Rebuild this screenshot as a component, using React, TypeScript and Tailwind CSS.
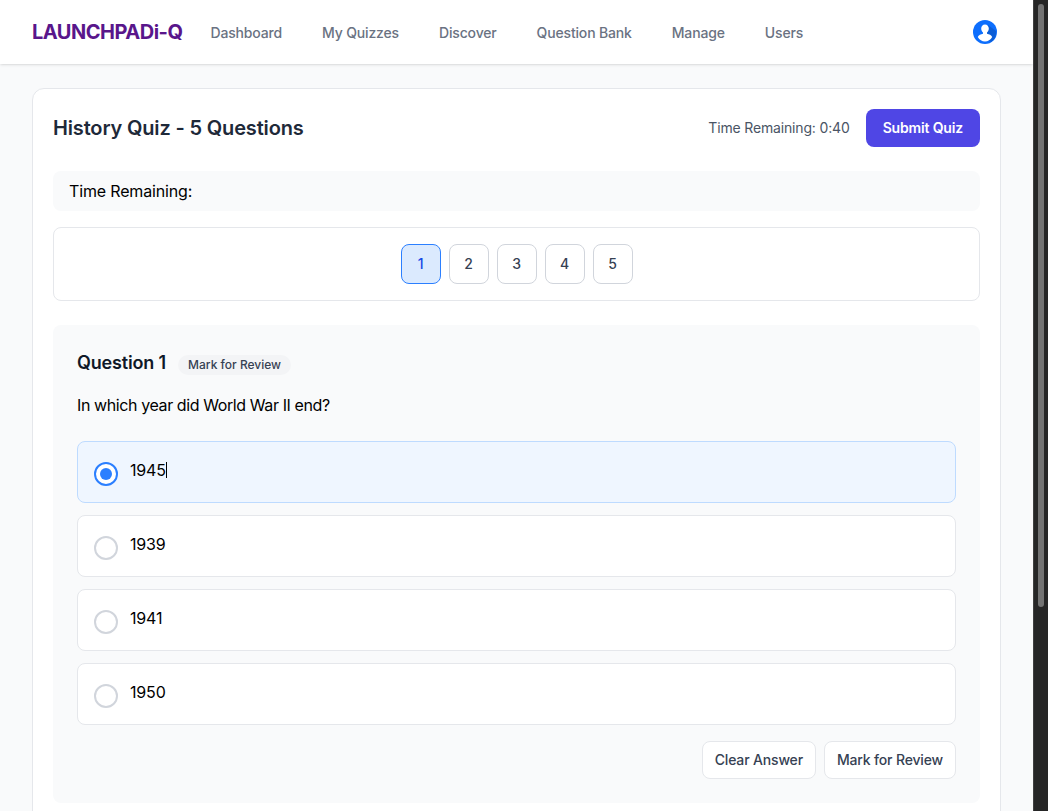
const links = ["Dashboard", "My Quizzes", "Discover", "Question Bank", "Manage", "Users"];
const pages = [1, 2, 3, 4, 5];
const options = ["1945", "1939", "1941", "1950"];

const Avatar = () => (
  <svg viewBox="0 0 24 24" className="h-6 w-6">
    <circle cx="12" cy="12" r="12" fill="#0d6efd" />
    <path fill="#0b5ed7" d="M15 5l8 6a12 12 0 0 1-5 11l-6-4z" />
    <path
      fill="#fff"
      d="M12 4.500c-2.300 0-3.800 1.800-3.800 4 0 1.700.7 3.100 1.800 4v1.200c-2.100.5-4.400 1.400-5.200 3.200C6.400 19.700 9 21.500 12 21.500s5.600-1.800 7.200-4.600c-.8-1.800-3.100-2.700-5.200-3.200v-1.200c1.100-.9 1.800-2.300 1.800-4 0-2.200-1.500-4-3.800-4z"
    />
  </svg>
);

const App = () => {
  return (
    <div className="flex h-screen overflow-hidden font-['Inter',sans-serif] tracking-[-0.01em]">
      <div className="min-w-0 flex-1 bg-gray-50">
        {/* Nav */}
        <header className="flex h-16 items-center justify-between bg-white px-8 shadow">
          <div className="flex items-center gap-7">
            <span className="text-xl font-bold tracking-tight text-purple-900">LAUNCHPADi-Q</span>
            <nav className="flex gap-10 pt-0.5">
              {links.map((l) => (
                <a key={l} className="text-sm font-medium text-gray-500">
                  {l}
                </a>
              ))}
            </nav>
          </div>
          <div className="pr-1">
            <Avatar />
          </div>
        </header>

        <main className="px-8 py-6">
          <div className="rounded-xl border border-gray-200 bg-white p-5">
            <div className="mb-6 flex items-center justify-between">
              <h1 className="text-xl font-semibold text-gray-800">History Quiz - 5 Questions</h1>
              <div className="flex items-center gap-4">
                <span className="text-sm text-gray-600">Time Remaining: 0:40</span>
                <button className="rounded-lg border border-transparent bg-[#4f46e5] px-4 py-2 text-sm font-semibold text-white">
                  Submit Quiz
                </button>
              </div>
            </div>

            <div className="mb-4 rounded-lg bg-gray-50 px-4 py-2 text-black">Time Remaining:</div>

            <div className="mb-6 flex justify-center gap-2 rounded-lg border border-gray-200 p-4">
              {pages.map((p) =>
                p === 1 ? (
                  <button
                    key={p}
                    className="h-10 w-10 rounded-lg border border-blue-500 bg-blue-100 text-sm font-medium text-blue-700"
                  >
                    {p}
                  </button>
                ) : (
                  <button
                    key={p}
                    className="h-10 w-10 rounded-lg border border-gray-300 bg-white text-sm font-medium text-gray-700"
                  >
                    {p}
                  </button>
                ),
              )}
            </div>

            <section className="rounded-lg bg-gray-50 p-6">
              <div className="mb-4 flex items-center gap-3">
                <h2 className="text-lg font-semibold text-gray-900">Question 1</h2>
                <span className="mt-1 rounded-full bg-gray-100 px-2.5 py-0.5 text-xs font-medium tracking-normal text-gray-700">
                  Mark for Review
                </span>
              </div>
              <p className="mb-6 tracking-tight text-black">In which year did World War II end?</p>

              <div className="flex flex-col gap-3">
                {options.map((o, i) => (
                  <label
                    key={o}
                    className={
                      i === 0
                        ? "flex gap-3 rounded-lg border border-blue-200 bg-blue-50 p-4"
                        : "flex gap-3 rounded-lg border border-gray-200 bg-white p-4"
                    }
                  >
                    {i === 0 ? (
                      <span className="mt-1 flex h-6 w-6 items-center justify-center rounded-full border-2 border-blue-500 bg-white">
                        <span className="h-3 w-3 rounded-full bg-blue-500" />
                      </span>
                    ) : (
                      <span className="mt-1 h-6 w-6 rounded-full border-2 border-gray-300 bg-white" />
                    )}
                    <span className="text-black">
                      {o}
                      {i === 0 && <span className="inline-block h-4 w-px translate-y-0.5 bg-black" />}
                    </span>
                  </label>
                ))}
              </div>

              <div className="mt-4 flex justify-end gap-2">
                <button className="rounded-lg border border-gray-200 bg-white px-3 py-2 text-sm font-medium text-gray-700">
                  Clear Answer
                </button>
                <button className="rounded-lg border border-gray-200 bg-white px-3 py-2 text-sm font-medium text-gray-700">
                  Mark for Review
                </button>
              </div>
            </section>
          </div>
        </main>
      </div>

      {/* Scrollbar */}
      <div className="w-[15px] shrink-0 border-l border-neutral-700 bg-neutral-800 px-1 pt-1">
        <div className="h-[603px] rounded-full bg-neutral-500" />
      </div>
    </div>
  );
};

export default App;
